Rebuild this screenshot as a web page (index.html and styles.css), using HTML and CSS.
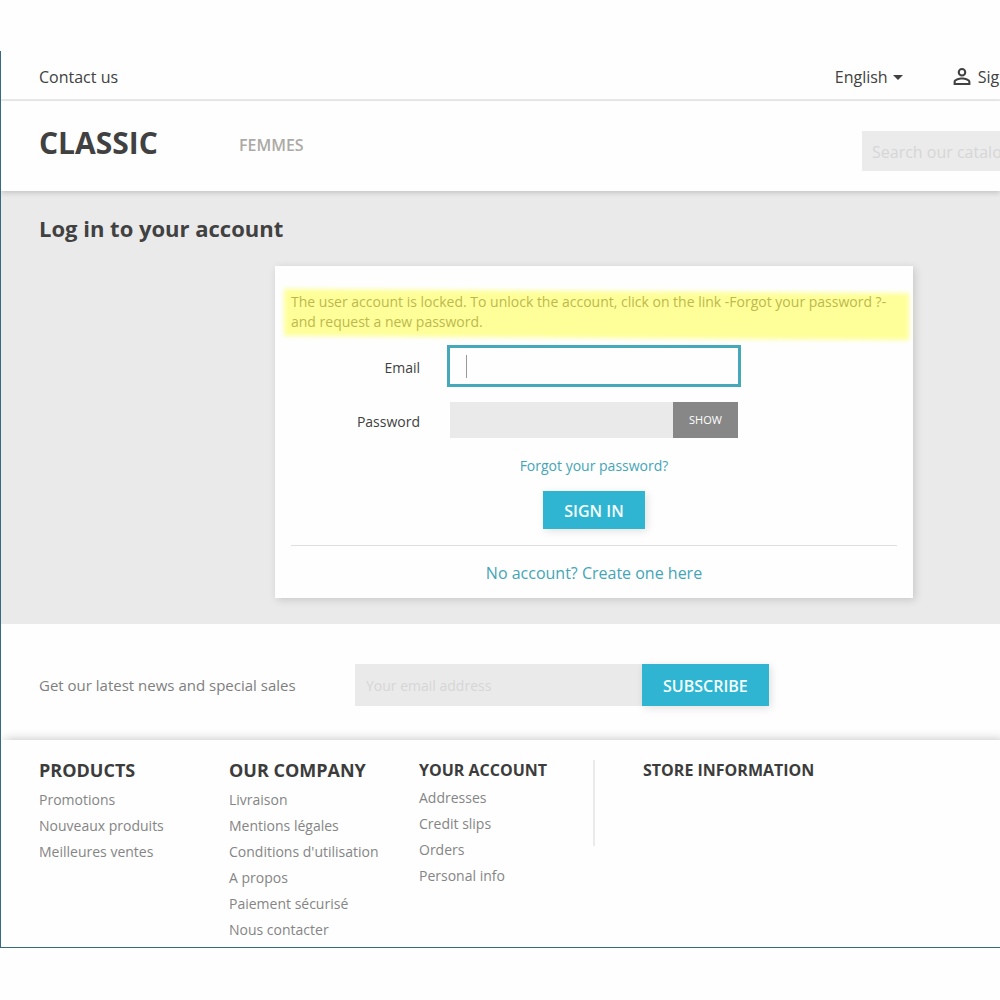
FILE: index.html
```html
<!DOCTYPE html>
<html lang="en">
<head>
    <meta charset="UTF-8">
    <meta name="viewport" content="width=device-width, initial-scale=1.0">
    <title>Log in to your account</title>
    <link rel="stylesheet" href="styles.css">
</head>
<body>
    <div class="shop">
        <!-- Top bar -->
        <nav class="top-nav">
            <div class="container">
                <a href="#">Contact us</a>
                <div class="nav-right">
                    <button type="button" class="language">English <span class="caret"></span></button>
                    <a href="#" class="sign-in">
                        <svg width="24" height="24" viewBox="0 0 24 24" fill="currentColor" aria-hidden="true">
                            <path d="M12 3a4.300 4.300 0 1 0 0 8.600 4.300 4.300 0 0 0 0-8.600zm0 2.100a2.200 2.200 0 1 1 0 4.400 2.200 2.200 0 0 1 0-4.400zm0 7.400c-2.900 0-8.400 1.400-8.400 4.200V20h16.800v-3.300c0-2.800-5.500-4.200-8.400-4.200zm0 2c3 0 6.300 1.400 6.300 2.200v1.200H5.700v-1.200c0-.8 3.300-2.200 6.300-2.200z"/>
                        </svg>
                        <span>Sign in</span>
                    </a>
                </div>
            </div>
        </nav>

        <!-- Logo, menu and search -->
        <header class="header">
            <div class="container">
                <a href="#" class="logo">CLASSIC</a>
                <a href="#" class="menu-link">FEMMES</a>
                <input type="text" class="search" placeholder="Search our catalog" aria-label="Search">
            </div>
        </header>

        <!-- Login Form -->
        <main class="main">
            <div class="container">
                <h1>Log in to your account</h1>
                <section class="card">
                    <form id="loginForm">
                        <p class="alert"><span>The user account is locked. To unlock the account, click on the link -Forgot your password ?- and request a new password.</span></p>
                        <div class="form-row">
                            <label for="email">Email</label>
                            <div class="field focused">
                                <input type="email" id="email">
                            </div>
                        </div>
                        <div class="form-row">
                            <label for="password">Password</label>
                            <div class="field">
                                <input type="password" id="password">
                                <button type="button" class="show-button">SHOW</button>
                            </div>
                        </div>
                        <a href="#" class="forgot">Forgot your password?</a>
                        <button type="submit" class="primary">SIGN IN</button>
                    </form>
                    <div class="no-account">
                        <a href="#">No account? Create one here</a>
                    </div>
                </section>
            </div>
        </main>

        <!-- Newsletter -->
        <section class="newsletter">
            <div class="container">
                <label for="newsletterEmail">Get our latest news and special sales</label>
                <form>
                    <input type="email" id="newsletterEmail" placeholder="Your email address">
                    <button type="submit" class="primary">SUBSCRIBE</button>
                </form>
            </div>
        </section>

        <footer class="footer">
            <div class="container">
                <div class="links">
                    <h2>PRODUCTS</h2>
                    <ul>
                        <li><a href="#">Promotions</a></li>
                        <li><a href="#">Nouveaux produits</a></li>
                        <li><a href="#">Meilleures ventes</a></li>
                    </ul>
                </div>
                <div class="links">
                    <h2>OUR COMPANY</h2>
                    <ul>
                        <li><a href="#">Livraison</a></li>
                        <li><a href="#">Mentions légales</a></li>
                        <li><a href="#">Conditions d'utilisation</a></li>
                        <li><a href="#">A propos</a></li>
                        <li><a href="#">Paiement sécurisé</a></li>
                        <li><a href="#">Nous contacter</a></li>
                    </ul>
                </div>
                <div class="links account">
                    <h3>YOUR ACCOUNT</h3>
                    <ul>
                        <li><a href="#">Addresses</a></li>
                        <li><a href="#">Credit slips</a></li>
                        <li><a href="#">Orders</a></li>
                        <li><a href="#">Personal info</a></li>
                    </ul>
                </div>
                <div class="store">
                    <h3>STORE INFORMATION</h3>
                </div>
            </div>
        </footer>
    </div>
</body>
</html>
```
FILE: styles.css
```css
/* General Styles */
* {
    box-sizing: border-box;
}

body {
    font-family: "Open Sans", "Noto Sans", sans-serif;
    font-size: 14px;
    line-height: 20px;
    color: #414141;
    background-color: #fefefe;
    margin: 0;
    padding: 51px 0;
}

h1, h2, h3, p, ul {
    margin: 0;
    padding: 0;
}

a {
    color: inherit;
    text-decoration: none;
}

input,
button {
    font-family: inherit;
    border: none;
    border-radius: 0;
    margin: 0;
}

button {
    cursor: pointer;
}

.shop {
    overflow: hidden;
    border-left: 1px solid #356a80;
    border-bottom: 1px solid #356a80;
}

/* The row is wider than the window, its right end is cut off */
.container {
    margin: 0 -149px 0 38px;
}

.primary {
    background-color: #2fb5d2;
    color: #f4ffff;
    font-size: 16px;
    font-weight: 600;
    line-height: 20px;
    padding: 10px 21px 8px;
    box-shadow: 2px 2px 8px rgba(0, 0, 0, 0.12);
}

/* Top bar */
.top-nav {
    border-bottom: 2px solid #ebebeb;
    font-size: 16px;
}

.top-nav .container {
    display: flex;
    justify-content: space-between;
    align-items: center;
    height: 48px;
    padding-top: 4px;
}

.nav-right {
    display: flex;
    align-items: center;
    gap: 47px;
    padding-right: 122px;
}

.language {
    display: flex;
    align-items: center;
    gap: 5px;
    padding: 0;
    background: none;
    color: inherit;
    font-size: 16px;
}

.caret {
    border: 5px solid transparent;
    border-top-color: #414141;
    border-bottom: none;
}

.sign-in {
    display: flex;
    align-items: center;
    gap: 4px;
}

/* Header */
.header {
    position: relative;
    box-shadow: 0 2px 5px rgba(0, 0, 0, 0.16);
}

.header .container {
    display: flex;
    align-items: center;
    height: 90px;
}

.logo {
    width: 200px;
    font-size: 30px;
    font-weight: 700;
    line-height: 40px;
    padding-bottom: 6px;
}

.menu-link {
    color: #acaaa6;
    font-size: 16px;
    font-weight: 600;
    padding-bottom: 2px;
}

.search {
    width: 287px;
    height: 40px;
    margin: 10px 0 0 auto;
    padding: 2px 10px 0;
    background-color: #ebebeb;
    font-size: 16px;
}

input::placeholder {
    color: #d6d6d6;
    opacity: 1;
}

/* Login */
.main {
    background-color: #eaeaea;
    padding: 22px 0 26px;
}

h1 {
    font-size: 22px;
    line-height: 30px;
}

.card {
    width: 638px;
    margin: 23px auto 0;
    padding: 26px 16px 15px;
    background-color: #fefefe;
    box-shadow: 2px 2px 8px rgba(0, 0, 0, 0.15);
}

.card form {
    display: flex;
    flex-direction: column;
    align-items: center;
}

.alert {
    position: relative;
    align-self: stretch;
    margin-bottom: 16px;
    color: #bdb84e;
}

/* Marker stroke behind the message */
.alert::before {
    content: "";
    position: absolute;
    inset: -1px -12px -6px -7px;
    background-color: #feff99;
    filter: blur(2px);
    transform: skewY(0.4deg);
}

.alert span {
    position: relative;
}

.form-row {
    display: grid;
    grid-template-columns: 1fr 288px 1fr;
    column-gap: 30px;
    align-self: stretch;
    align-items: center;
    margin-bottom: 18px;
}

.form-row label {
    text-align: right;
    padding-top: 3px;
}

.field {
    position: relative;
    display: flex;
    height: 36px;
}

.field input {
    flex: 1;
    min-width: 0;
    padding: 0 16px;
    background-color: #eaeaea;
    outline: none;
}

.field.focused input {
    background-color: #fefefe;
    outline: 3px solid #45a9ba;
}

.field.focused::after {
    content: "";
    position: absolute;
    left: 16px;
    top: 7px;
    bottom: 6px;
    border-left: 1px solid #999;
}

.show-button {
    width: 65px;
    padding-bottom: 2px;
    background-color: #878787;
    color: #fff;
    font-size: 11px;
}

.forgot {
    color: #45a5b7;
    margin-bottom: 15px;
}

.no-account {
    margin-top: 16px;
    padding-top: 17px;
    border-top: 1px solid #dfdfdf;
    color: #45a5b7;
    font-size: 16px;
    text-align: center;
}

/* Newsletter */
.newsletter .container {
    display: flex;
    align-items: center;
    height: 116px;
    padding-top: 6px;
}

.newsletter label {
    width: 316px;
    color: #7e7e7e;
    font-size: 15px;
}

.newsletter form {
    display: flex;
    height: 42px;
}

.newsletter input {
    width: 287px;
    padding: 0 11px;
    background-color: #eaeaea;
    font-size: 14px;
}

/* Footer */
.footer {
    padding: 20px 0 1px;
    box-shadow: 4px 0 10px rgba(0, 0, 0, 0.25);
}

.footer .container {
    display: flex;
    align-items: flex-start;
}

.links {
    width: 190px;
    color: #858585;
}

.links.account {
    width: 174px;
}

.links ul {
    list-style: none;
}

.links li {
    margin-bottom: 6px;
}

h2,
h3 {
    color: #3c3c3c;
    line-height: 20px;
}

h2 {
    font-size: 18px;
    margin-bottom: 10px;
}

h3 {
    font-size: 16px;
    margin-bottom: 8px;
}

.store {
    min-height: 86px;
    padding-left: 48px;
    border-left: 2px solid #ebebeb;
}
```
